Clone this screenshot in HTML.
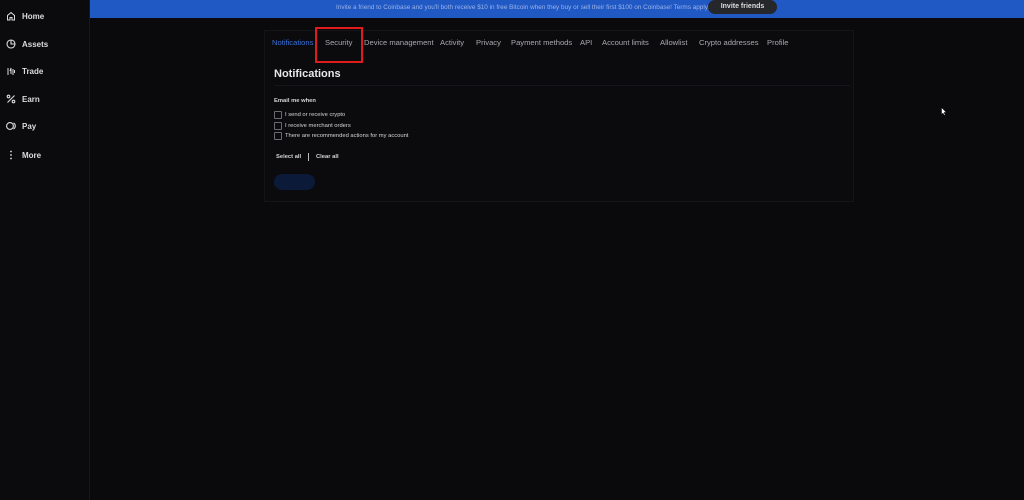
<!DOCTYPE html>
<html><head><meta charset="utf-8"><style>
*{margin:0;padding:0;box-sizing:border-box}
body{width:1024px;height:500px;background:#0a0a0c;font-family:"Liberation Sans",sans-serif;color:#e8e8ea;position:relative;overflow:hidden}
.side{position:absolute;left:0;top:0;width:90px;height:500px;background:#0b0b0d;border-right:1px solid #18181b}
.nav{position:absolute;left:6px;font-size:8px;font-weight:bold;color:#dcdcde;display:flex;align-items:center}
.nav svg{width:10px;height:10px;margin-right:6px}
.banner{position:absolute;left:90px;top:0;right:0;height:18px;background:#2058c4}
.banner .t{position:absolute;left:246px;top:4px;font-size:6.4px;color:#9bb4e8;white-space:nowrap}
.btn{position:absolute;left:708px;top:0;width:69px;height:14px;border-radius:7px;background:#26272b;color:#ddd;font-size:7px;font-weight:bold;text-align:center;line-height:13px}
.card{position:absolute;left:264px;top:30px;width:590px;height:172px;border:1px solid #151518;background:#0b0b0d}
.tabs{position:absolute;left:272px;top:38px;font-size:7.6px;color:#a8a9ae;white-space:nowrap}
.tabs span{position:absolute;top:0}
.h{position:absolute;left:274px;top:68px;font-size:11px;font-weight:bold;color:#e8e8ea}
.hr{position:absolute;left:274px;top:85px;width:576px;height:1px;background:#16161a}
.s{position:absolute;font-size:5.8px;color:#d6d6d8}
.cb{position:absolute;left:274px;width:8px;height:8px;border:1px solid #6a6a70;border-radius:1px}
.red{position:absolute;left:315px;top:27px;width:48px;height:36px;border:2px solid #e01b1b}
.sv{position:absolute;left:274px;top:174px;width:41px;height:16px;border-radius:8px;background:#0c1a3a}
</style></head><body>
<div class="side">
<div class="nav" style="top:11px"><svg viewBox="0 0 10 10" fill="none" stroke="#ddd" stroke-width="1"><path d="M1.5 9V4.5L5 1.5 8.5 4.5V9H6V6.5H4V9Z"/></svg>Home</div>
<div class="nav" style="top:39px"><svg viewBox="0 0 10 10" fill="none" stroke="#ddd" stroke-width="1.1"><circle cx="5" cy="5" r="4"/><path d="M5 1v4h4"/></svg>Assets</div>
<div class="nav" style="top:66px"><svg viewBox="0 0 10 10" fill="none" stroke="#ddd" stroke-width="1"><path d="M2 2v7M4 5l1-3v6M7 3v6M8.5 4v3"/></svg>Trade</div>
<div class="nav" style="top:94px"><svg viewBox="0 0 10 10" fill="none" stroke="#ddd" stroke-width="1.1"><path d="M8.5 1.5L1.5 8.5"/><circle cx="2.5" cy="2.5" r="1.3"/><circle cx="7.5" cy="7.5" r="1.3"/></svg>Earn</div>
<div class="nav" style="top:121px"><svg viewBox="0 0 10 10" fill="none" stroke="#ddd" stroke-width="1.1"><circle cx="4" cy="5" r="3.4"/><path d="M7.5 2a3.4 3.4 0 0 1 0 6"/></svg>Pay</div>
<div class="nav" style="top:150px"><svg viewBox="0 0 10 10" fill="#ddd"><circle cx="5" cy="1.5" r="0.9"/><circle cx="5" cy="5" r="0.9"/><circle cx="5" cy="8.5" r="0.9"/></svg>More</div>
</div>
<div class="banner"><div class="t">Invite a friend to Coinbase and you'll both receive $10 in free Bitcoin when they buy or sell their first $100 on Coinbase! Terms apply.</div></div>
<div class="btn">Invite friends</div>
<div class="card"></div>
<div class="tabs">
<span style="left:0;color:#3a6fd8">Notifications</span>
<span style="left:53px">Security</span>
<span style="left:92px">Device management</span>
<span style="left:168px">Activity</span>
<span style="left:204px">Privacy</span>
<span style="left:239px">Payment methods</span>
<span style="left:308px">API</span>
<span style="left:330px">Account limits</span>
<span style="left:388px">Allowlist</span>
<span style="left:427px">Crypto addresses</span>
<span style="left:495px">Profile</span>
</div>
<div class="red"></div>
<div class="h">Notifications</div>
<div class="hr"></div>
<div class="s" style="left:274px;top:98px;font-weight:bold">Email me when</div>
<div class="cb" style="top:111px"></div><div class="s" style="left:285px;top:112px">I send or receive crypto</div>
<div class="cb" style="top:122px"></div><div class="s" style="left:285px;top:123px">I receive merchant orders</div>
<div class="cb" style="top:132px"></div><div class="s" style="left:285px;top:133px">There are recommended actions for my account</div>
<div class="s" style="left:276px;top:154px;font-weight:bold">Select all</div>
<div style="position:absolute;left:308px;top:153px;width:1px;height:8px;background:#bbb"></div>
<div class="s" style="left:316px;top:154px;font-weight:bold">Clear all</div>
<div class="sv"></div>
<svg style="position:absolute;left:941px;top:107px" width="6" height="9" viewBox="0 0 6 9"><path d="M0.5 0.5V7.5L2 6 3.2 8.5 4.2 8 3 5.5H5.3Z" fill="#fff" stroke="#000" stroke-width="0.5"/></svg>
</body></html>
